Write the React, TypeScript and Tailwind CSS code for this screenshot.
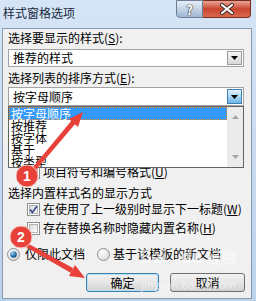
import React from 'react'

const Check = ({ checked }: { checked?: boolean }) => (
  <span className="relative flex h-[13px] w-[13px] shrink-0 items-center justify-center border border-[#8e8f8f] bg-white">
    <span className="h-[9px] w-[9px] border border-[#b4b4b4] bg-gradient-to-br from-[#dcdcdc] to-[#fbfbfb]" />
    {checked && (
      <svg className="absolute left-0 top-0" width="11" height="11" viewBox="0 0 11 11">
        <path d="M2.2 5.6 L4.4 8.4 L8.9 2.2" fill="none" stroke="#3a4f8c" strokeWidth="1.7" />
      </svg>
    )}
  </span>
)

const Radio = ({ checked }: { checked?: boolean }) => (
  <svg width="13" height="13" viewBox="0 0 13 13" className="shrink-0">
    <defs>
      <radialGradient id="rbg" cx="0.35" cy="0.35" r="0.8">
        <stop offset="0" stopColor="#ffffff" />
        <stop offset="1" stopColor="#d4d4d4" />
      </radialGradient>
      <radialGradient id="rdot" cx="0.35" cy="0.3" r="0.8">
        <stop offset="0" stopColor="#9fd4f4" />
        <stop offset="0.6" stopColor="#2a73a9" />
        <stop offset="1" stopColor="#123c63" />
      </radialGradient>
    </defs>
    <circle cx="6.5" cy="6.5" r="6" fill="url(#rbg)" stroke="#8e8f8f" />
    {checked && <circle cx="6.5" cy="6.5" r="3.3" fill="url(#rdot)" />}
  </svg>
)

const Arrow = () => (
  <svg width="7" height="4" viewBox="0 0 7 4">
    <path d="M0 0 H7 L3.5 4 Z" fill="#000" />
  </svg>
)

const U = ({ k }: { k: string }) => (
  <span>
    (<span className="underline underline-offset-1">{k}</span>)
  </span>
)

export default function App() {
  return (
    <div className="relative h-[301px] w-[256px] overflow-hidden bg-gradient-to-b from-[#d5e5f6] via-[#c7daef] to-[#bcd3ec] font-['Noto_Sans_CJK_SC','Noto_Sans',sans-serif] text-[12px] leading-[14px] text-black">
      {/* title bar */}
      <div className="flex h-[28px] items-start">
        <span className="ml-[3px] mt-[6px] text-[12px] leading-[14px] text-[#1b2a3d]">样式窗格选项</span>
        <div className="ml-auto mr-[5px] flex h-[18px]">
          <div className="flex w-[27px] items-center justify-center rounded-bl-[4px] border border-[#6d7f97] bg-gradient-to-b from-[#e6eef8] via-[#c4d4e7] to-[#9fb6d2] text-[13px] font-bold leading-none text-white [text-shadow:0_0_1px_#333,0_0_1px_#333,0_0_1px_#333]">
            ?
          </div>
          <div className="flex w-[48px] items-center justify-center rounded-br-[4px] border border-l-0 border-[#7a2c22] bg-gradient-to-b from-[#e8a595] via-[#c8442f] to-[#d86a4f]">
            <svg width="16" height="12" viewBox="0 0 16 12">
              <path d="M3 2 L13 10 M13 2 L3 10" stroke="#3b2a28" strokeWidth="4" strokeLinecap="round" />
              <path d="M3 2 L13 10 M13 2 L3 10" stroke="#fff" strokeWidth="2.2" strokeLinecap="round" />
            </svg>
          </div>
        </div>
      </div>

      {/* dialog body */}
      <div className="ml-[2px] flex h-[271px] w-[250px] flex-col border border-[#8a9aad] bg-[#f0f0f0]">
        <div className="ml-[5px] mt-[2px]">
          选择要显示的样式<U k="S" />:
        </div>
        <div className="ml-[5px] mt-[4px] flex h-[18px] w-[236px] items-center border border-[#a3a3a3] bg-white pl-[4px]">
          <span>推荐的样式</span>
          <span className="ml-auto mr-[1px] flex h-[14px] w-[15px] items-center justify-center border border-[#9a9a9a] bg-gradient-to-b from-[#f4f4f4] to-[#d8d8d8]">
            <Arrow />
          </span>
        </div>
        <div className="ml-[5px] mt-[4px]">
          选择列表的排序方式<U k="E" />:
        </div>
        <div className="relative ml-[5px] mt-[2px] w-[236px]">
          <div className="flex h-[19px] items-center border border-[#a3a3a3] bg-white pl-[4px]">
            <span>按字母顺序</span>
            <span className="ml-auto mr-[1px] flex h-[15px] w-[15px] items-center justify-center border border-[#3c7fb1] bg-gradient-to-b from-[#e3f2fc] via-[#a9d6f3] to-[#6cb4e6]">
              <Arrow />
            </span>
          </div>
          {/* open dropdown list */}
          <div className="absolute left-0 top-full z-10 flex h-[62px] w-[236px] border border-[#646464] bg-white">
            <div className="flex-1 overflow-hidden">
              <div className="h-[13px] border border-dotted border-[#e2893a] bg-[#3399ff] pl-[1px] leading-[11px] text-white">按字母顺序</div>
              <div className="h-[12px] pl-[2px] leading-[12px]">按推荐</div>
              <div className="h-[12px] pl-[2px] leading-[12px]">按字体</div>
              <div className="h-[12px] pl-[2px] leading-[12px]">基于</div>
              <div className="h-[11px] pl-[2px] leading-[12px]">按类型</div>
            </div>
            <div className="flex w-[16px] flex-col items-center justify-between bg-[#ebebeb] py-[8px]">
              <svg width="7" height="4" viewBox="0 0 7 4"><path d="M3.5 0 L7 4 H0 Z" fill="#a6a6a6" /></svg>
              <svg width="7" height="4" viewBox="0 0 7 4"><path d="M0 0 H7 L3.5 4 Z" fill="#a6a6a6" /></svg>
            </div>
          </div>
        </div>

        {/* rows hidden behind the open list */}
        <div className="invisible ml-[5px] mt-[3px]">选择显示为样式的格式:</div>
        <div className="invisible ml-[24px] mt-[4px] flex h-[14px] items-center gap-[3px]">
          <Check checked />
          <span>段落级别格式<U k="P" /></span>
        </div>
        <div className="invisible ml-[24px] mt-[5px] flex h-[14px] items-center gap-[3px]">
          <Check />
          <span>字体格式<U k="F" /></span>
        </div>
        <div className="ml-[24px] mt-[5px] flex h-[14px] items-center gap-[3px]">
          <Check />
          <span>项目符号和编号格式<U k="U" /></span>
        </div>

        <div className="ml-[5px] mt-[7px]">选择内置样式名的显示方式</div>
        <div className="ml-[24px] mt-[2px] flex h-[14px] items-center gap-[3px]">
          <Check checked />
          <span>在使用了上一级别时显示下一标题<U k="W" /></span>
        </div>
        <div className="ml-[24px] mt-[5px] flex h-[14px] items-center gap-[3px]">
          <Check />
          <span>存在替换名称时隐藏内置名称<U k="H" /></span>
        </div>

        <div className="ml-[4px] mt-[12px] flex h-[14px] items-center">
          <Radio checked />
          <span className="ml-[5px]">仅限此文档</span>
          <span className="ml-[12px]"><Radio /></span>
          <span className="ml-[3px]">基于该模板的新文档</span>
        </div>

        <div className="ml-[83px] mt-[12px] flex gap-[11px]">
          <button className="flex h-[19px] w-[73px] items-center justify-center rounded-[3px] border border-[#3c7fb1] bg-gradient-to-b from-[#f2f2f2] via-[#e6e6e6] to-[#d2d2d2] shadow-[inset_0_0_0_1px_#b8e1f7]">
            确定
          </button>
          <button className="flex h-[19px] w-[75px] items-center justify-center rounded-[3px] border border-[#707070] bg-gradient-to-b from-[#f2f2f2] via-[#e6e6e6] to-[#d2d2d2]">
            取消
          </button>
        </div>
      </div>

      {/* watermark */}
      <div className="pointer-events-none absolute left-[140px] top-[247px] text-[17px] font-bold leading-[18px] text-white/60">
        Bai<span className="ml-[14px]">du</span> <span className="text-[15px]">经验</span>
      </div>
      <div className="pointer-events-none absolute left-[141px] top-[278px] text-[11px] leading-[12px] text-white/50">
        jingyan.baidu.com
      </div>

      {/* annotation arrows and badges */}
      <svg className="pointer-events-none absolute left-0 top-0 z-20" width="256" height="301" viewBox="0 0 256 301">
        <polygon points="33,167 36,170 76,123 72,120" fill="#e8413a" />
        <polygon points="83,112 69,119 78,127" fill="#e8413a" />
        <circle cx="27" cy="176" r="11" fill="#e8413a" stroke="#f7c9c4" strokeWidth="1" />
        <text x="27" y="181" textAnchor="middle" fontSize="14" fontWeight="bold" fill="#fff" fontFamily="Liberation Sans, sans-serif">1</text>

        <polygon points="27,243 26,247 71,273 73,268" fill="#e8413a" />
        <polygon points="85,278 75,265 69,276" fill="#e8413a" />
        <circle cx="21" cy="237" r="11" fill="#e8413a" stroke="#f7c9c4" strokeWidth="1" />
        <text x="21" y="242" textAnchor="middle" fontSize="14" fontWeight="bold" fill="#fff" fontFamily="Liberation Sans, sans-serif">2</text>
      </svg>
    </div>
  )
}
